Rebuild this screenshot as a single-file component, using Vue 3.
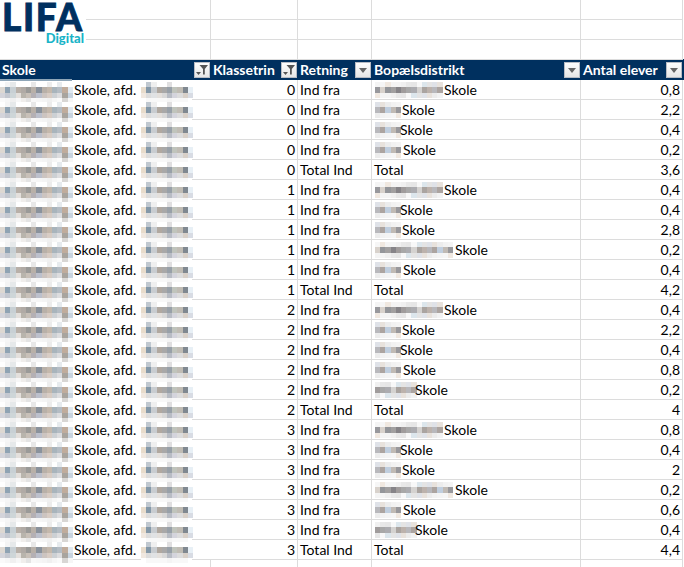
<script setup>
const rows = [
  [0, 'Ind fra', 68, '0,8'], [0, 'Ind fra', 26, '2,2'], [0, 'Ind fra', 24, '0,4'], [0, 'Ind fra', 27, '0,2'], [0, 'Total Ind', 0, '3,6'],
  [1, 'Ind fra', 68, '0,4'], [1, 'Ind fra', 24, '0,4'], [1, 'Ind fra', 26, '2,8'], [1, 'Ind fra', 79, '0,2'], [1, 'Ind fra', 27, '0,4'], [1, 'Total Ind', 0, '4,2'],
  [2, 'Ind fra', 68, '0,4'], [2, 'Ind fra', 26, '2,2'], [2, 'Ind fra', 24, '0,4'], [2, 'Ind fra', 27, '0,8'], [2, 'Ind fra', 39, '0,2'], [2, 'Total Ind', 0, '4'],
  [3, 'Ind fra', 68, '0,8'], [3, 'Ind fra', 24, '0,4'], [3, 'Ind fra', 26, '2'], [3, 'Ind fra', 79, '0,2'], [3, 'Ind fra', 27, '0,6'], [3, 'Ind fra', 39, '0,4'], [3, 'Total Ind', 0, '4,4']
]

const schoolBands = [
  ['#fff', '#f4f4f4', '#e6e9ea', '#fff', '#fff', '#fff', '#e8e8e8', '#fff', '#fff', '#ededed', '#fff', '#e7ebee', '#fff', '#fff'],
  ['#ddd8d2', '#8fa3b3', '#c8d0d4', '#b8b0a8', '#b0aaa5', '#9a9a98', '#b8b0a8', '#8a929c', '#b8b0a8', '#c4b8ac', '#a8b4bc', '#b4bcc4', '#c0ac9c', '#dfe8f0'],
  ['#d4d4da', '#c4c8d0', '#ced6d8', '#e4e0dc', '#b8b4ac', '#c8c0b8', '#b4b0b4', '#bcc0cc', '#ccc4c0', '#d8ccc4', '#ccd0d4', '#dcdcde', '#a8a49e', '#c8d4e0'],
  ['#fafafa', '#f6f6f6', '#f0f0f0', '#f7f7f7', '#f0eeec', '#e4e4e4', '#f8f8f8', '#f6f6f6', '#f4f4f4', '#f0f0f0', '#f6f6f6', '#fafafa', '#d8d6d4', '#f6f6f6']
]
const placeBands = [
  ['#fff', '#c0c8d0', '#efefef', '#fff', '#fff', '#e0dfe0', '#fff', '#fff', '#fff', '#fff'],
  ['#e8dccc', '#8498a8', '#c8ccd0', '#b0a8a0', '#a8a8a8', '#98a0a8', '#c0c4bc', '#c0bcb4', '#808890', '#e8f0f6'],
  ['#f0e8e0', '#dcdcdc', '#e0e2e4', '#e4e0dc', '#d8d8d8', '#b8bcc4', '#d4d4dc', '#dcdcdc', '#d8d0c8', '#d8dce4'],
  ['#fff', '#f8f8f8', '#f8f8f8', '#f8f8f8', '#f8f8f8', '#f4f4f4', '#f8f8f8', '#f8f8f8', '#f8f8f8', '#fff']
]
const districtBand = ['#d8d2cc', '#aaa4a0', '#94969a', '#bcb2ac', '#a2a0a0', '#b8b8bc', '#868488', '#aca4a0', '#a09c9c', '#c0cede', '#a8a8a8', '#c0bab4', '#acacb0', '#98989c', '#d4d2d0']
const districtPale = ['#f6f6f6', '#dce6ec', '#f0e8e0', '#e4e4e4', '#f4f4f4', '#dfe2e8', '#f4f4f4', '#e8e2dc', '#f0f0f0', '#ececec', '#e8e8e8', '#f2f2f2', '#e6e6e6', '#f4f4f4', '#f8f8f8']

const CELL = 5.2
const mosaic = (bands, top) => bands.flatMap((band, y) =>
  band.map((fill, x) => ({ key: x + '-' + y, x: x * CELL, y: top + y * 5.3, fill }))
)
const schoolCells = mosaic(schoolBands, 2)
const placeCells = mosaic(placeBands, 2)

const districtCells = (w) => {
  const n = Math.round(w / CELL)
  const out = []
  for (let x = 0; x < n; x++) {
    const i = (x * 2 + n) % districtBand.length
    out.push({ key: 'a' + x, x: x * CELL, y: 2, fill: districtPale[i] })
    out.push({ key: 'b' + x, x: x * CELL, y: 7.3, fill: districtBand[i] })
    out.push({ key: 'c' + x, x: x * CELL, y: 12.6, fill: districtPale[(i + 4) % 15] })
  }
  return out
}
</script>

<template>
  <main class="sheet">
    <div class="logo">
      <span class="logo-main">LIFA</span>
      <span class="logo-sub">Digital</span>
    </div>

    <div v-for="n in 3" :key="n" class="row blank">
      <i v-for="c in 5" :key="c"></i>
    </div>

    <div class="row head">
      <div class="hcell">
        <span>Skole</span>
        <span class="btn">
          <svg width="14" height="14" viewBox="0 0 14 14"><path d="M4.5 2h8.5L9.8 6V11.5H8V6zM1 9h5L3.5 12z" fill="#555"/></svg>
        </span>
      </div>
      <div class="hcell">
        <span>Klassetrin</span>
        <span class="btn">
          <svg width="14" height="14" viewBox="0 0 14 14"><path d="M4.5 2h8.5L9.8 6V11.5H8V6zM1 9h5L3.5 12z" fill="#555"/></svg>
        </span>
      </div>
      <div class="hcell">
        <span>Retning</span>
        <span class="btn">
          <svg width="14" height="14" viewBox="0 0 14 14"><path d="M3 5h8L7 10z" fill="#666"/></svg>
        </span>
      </div>
      <div class="hcell">
        <span>Bopælsdistrikt</span>
        <span class="btn">
          <svg width="14" height="14" viewBox="0 0 14 14"><path d="M3 5h8L7 10z" fill="#666"/></svg>
        </span>
      </div>
      <div class="hcell">
        <span>Antal elever</span>
        <span class="btn">
          <svg width="14" height="14" viewBox="0 0 14 14"><path d="M3 5h8L7 10z" fill="#666"/></svg>
        </span>
      </div>
    </div>
    <div class="selected"></div>

    <div v-for="(r, i) in rows" :key="i" class="row data" :class="{ last: i === rows.length - 1 }">
      <div class="school">
        <div class="school-name">
          <svg class="blur" width="72" height="20" shape-rendering="crispEdges">
            <rect v-for="c in schoolCells" :key="c.key" :x="c.x" :y="c.y" width="5.4" height="5.4" :fill="c.fill" />
          </svg>
          <span class="school-text">Skole, afd.</span>
          <svg class="blur" width="53" height="20" shape-rendering="crispEdges">
            <rect v-for="c in placeCells" :key="c.key" :x="c.x" :y="c.y" width="5.4" height="5.4" :fill="c.fill" />
          </svg>
        </div>
        <div class="school-tail"></div>
      </div>
      <div class="cell num">{{ r[0] }}</div>
      <div class="cell">{{ r[1] }}</div>
      <div class="cell" :class="{ district: r[2] }">
        <template v-if="r[2]">
          <svg class="blur" :width="r[2]" height="20" shape-rendering="crispEdges">
            <rect v-for="c in districtCells(r[2])" :key="c.key" :x="c.x" :y="c.y" width="5.4" height="5.4" :fill="c.fill" />
          </svg>
          <span class="school-word">Skole</span>
        </template>
        <template v-else>Total</template>
      </div>
      <div class="cell num">{{ r[3] }}</div>
    </div>

    <div class="row blank tail">
      <i v-for="c in 5" :key="c"></i>
    </div>
  </main>
</template>

<style scoped>
.sheet {
  position: relative;
  width: 684px;
  height: 567px;
  overflow: hidden;
  background: #fff;
  font-family: Lato, "Open Sans", sans-serif;
  font-size: 14px;
  color: #000;
}
.logo {
  position: absolute;
  left: 0;
  top: 0;
  width: 86px;
  height: 46px;
  z-index: 2;
  background: #fff;
}
.logo-main {
  position: absolute;
  left: 2px;
  top: 1px;
  font-size: 37px;
  line-height: 31px;
  font-weight: 900;
  letter-spacing: 1.6px;
  color: #00305f;
  -webkit-text-stroke: 0.8px #00305f;
}
.logo-sub {
  position: absolute;
  right: 2px;
  top: 32px;
  font-size: 13px;
  line-height: 13px;
  font-weight: 900;
  color: #1ab4c8;
}
.row {
  display: grid;
  grid-template-columns: 211px 87px 74px 209px 102px;
  height: 20px;
  box-sizing: border-box;
}
.blank i {
  border-right: 1px solid #dcdcdc;
  border-bottom: 1px solid #dcdcdc;
}
.tail {
  height: 7px;
}
.tail i {
  border-bottom: 0;
}
.head {
  height: 21px;
  margin-top: -1px;
  background: #00305f;
  color: #fff;
  font-weight: 700;
  width: 684px;
}
.hcell {
  display: flex;
  align-items: center;
  justify-content: space-between;
  padding-left: 2px;
  overflow: hidden;
  white-space: nowrap;
}
.btn {
  flex: none;
  width: 16px;
  height: 16px;
  display: flex;
  align-items: center;
  justify-content: center;
  box-sizing: border-box;
  margin-right: 1px;
  background: linear-gradient(#fdfdfd, #e6e6e6);
  border: 1px solid #b8bcc4;
}
.selected {
  position: absolute;
  left: 0;
  top: 79px;
  width: 72px;
  height: 2px;
  background: #8fa6b8;
}
.data {
  line-height: 20px;
  white-space: nowrap;
}
.school {
  display: flex;
}
.school-name {
  width: 192px;
  height: 20px;
  flex: none;
  display: flex;
  align-items: flex-start;
}
.school-tail {
  flex: 1;
  border-bottom: 1px solid #dcdcdc;
}
.data.last .school-name {
  border-bottom: 1px solid #dcdcdc;
  box-sizing: border-box;
}
.blur {
  flex: none;
  display: block;
  overflow: visible;
  height: 20px;
}
.school-text {
  width: 69px;
  flex: none;
  padding-left: 2px;
  box-sizing: border-box;
}
.cell {
  box-sizing: border-box;
  height: 20px;
  padding: 0 2px;
  border-right: 1px solid #dcdcdc;
  border-bottom: 1px solid #dcdcdc;
}
.num {
  text-align: right;
}
.district {
  display: flex;
  padding-left: 3px;
}
.school-word {
  padding-left: 1px;
}
</style>
